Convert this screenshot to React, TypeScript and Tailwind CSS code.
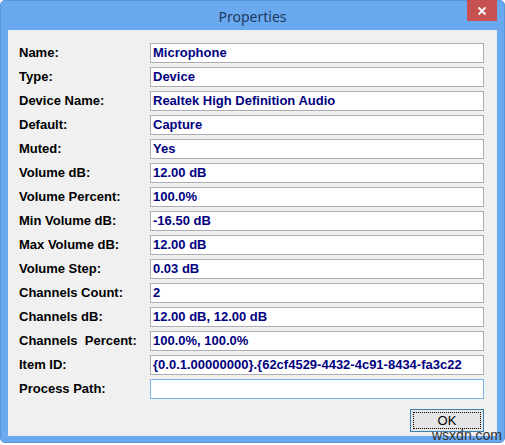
const ROWS = [
  { label: 'Name:', value: 'Microphone' },
  { label: 'Type:', value: 'Device' },
  { label: 'Device Name:', value: 'Realtek High Definition Audio' },
  { label: 'Default:', value: 'Capture' },
  { label: 'Muted:', value: 'Yes' },
  { label: 'Volume dB:', value: '12.00 dB' },
  { label: 'Volume Percent:', value: '100.0%' },
  { label: 'Min Volume dB:', value: '-16.50 dB' },
  { label: 'Max Volume dB:', value: '12.00 dB' },
  { label: 'Volume Step:', value: '0.03 dB' },
  { label: 'Channels Count:', value: '2' },
  { label: 'Channels dB:', value: '12.00 dB, 12.00 dB' },
  { label: 'Channels  Percent:', value: '100.0%, 100.0%' },
  { label: 'Item ID:', value: '{0.0.1.00000000}.{62cf4529-4432-4c91-8434-fa3c22' },
  { label: 'Process Path:', value: '', focused: true },
]

export default function App() {
  return (
    <div className="w-[505px] h-[445px] bg-white relative" style={{ fontFamily: '"Liberation Sans", Arial, sans-serif' }}>
      {/* Window frame */}
      <div className="w-[505px] h-[443px] bg-[#6aa8ef] border border-[#5a95dc] rounded-[5px] flex flex-col">
        {/* Title bar */}
        <div className="h-[29px] flex items-start relative">
          <div className="flex-1 text-center pt-[5px] text-[14px] text-[#1c3a5e]" style={{ fontFamily: '"Noto Sans", "Open Sans", sans-serif' }}>
            Properties
          </div>
          <div className="absolute right-[7px] top-[-1px] w-[30px] h-[21px] bg-[#c75050] flex items-center justify-center">
            <svg width="10" height="10" viewBox="0 0 10 10">
              <path d="M1.5 1.5 L8.5 8.5 M8.5 1.5 L1.5 8.5" stroke="white" strokeWidth="1.8" />
            </svg>
          </div>
        </div>

        {/* Client area */}
        <div className="mx-[7px] h-[406px] bg-[#f0f0f0] border border-[#e8eef6] flex flex-col pl-[10px] pr-[12px] pt-[12px]">
          <div className="flex flex-col gap-[4px]">
            {ROWS.map(r => (
              <div key={r.label} className="flex items-center h-[20px]">
                <div className="w-[131px] text-[13px] font-bold text-black whitespace-pre">{r.label}</div>
                <div
                  className={
                    'flex-1 h-[20px] bg-white border overflow-hidden whitespace-nowrap pl-[2px] text-[13px] font-bold text-[#000080] leading-[18px] ' +
                    (r.focused ? 'border-[#7eb4ea]' : 'border-[#abadb3]')
                  }
                >
                  {r.value}
                </div>
              </div>
            ))}
          </div>

          <div className="flex justify-end mt-[10px]">
            <div className="w-[74px] h-[23px] border border-[#3c7fb1] bg-[#e5e5e5] p-[2px]">
              <div className="w-full h-full border border-dotted border-black flex items-center justify-center text-[13px] text-black leading-none">
                OK
              </div>
            </div>
          </div>
        </div>
      </div>

      {/* watermark */}
      <div className="absolute left-[432px] top-[428px] text-[14px] text-[#333] leading-none">
        wsxdn.com
      </div>
    </div>
  )
}
